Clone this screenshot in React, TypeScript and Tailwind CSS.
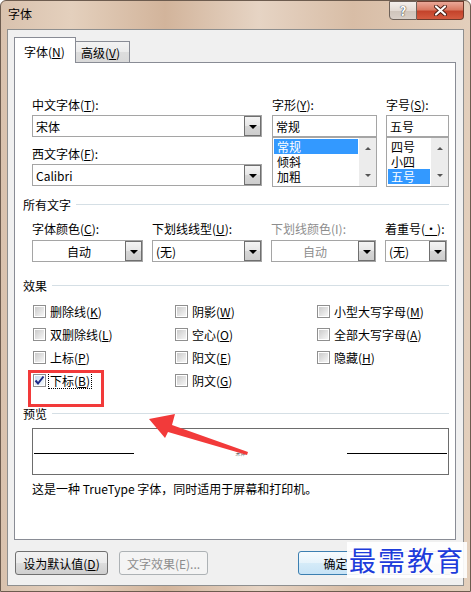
import React from "react";

const font = "font-['Noto_Sans_CJK_SC',sans-serif]";

function Acc({ children }: { children: React.ReactNode }) {
  return <span className="underline decoration-1 underline-offset-[1px]">{children}</span>;
}

function DropBtn() {
  return (
    <div className="w-[17px] self-stretch border border-[#6f6f6f] bg-[linear-gradient(#f4f4f4,#e6e6e6_50%,#d6d6d6_51%,#cdcdcd)] flex items-center justify-center">
      <div className="w-0 h-0 mt-[1px] border-l-[4px] border-r-[4px] border-t-[4px] border-l-transparent border-r-transparent border-t-black" />
    </div>
  );
}

function Combo({ text, btn, center, disabled }: { text: string; btn?: boolean; center?: boolean; disabled?: boolean }) {
  return (
    <div className="h-[22px] flex border border-[#a5a5a5] bg-white">
      <div
        className={
          "flex-1 flex items-center leading-[15px] " +
          (center ? "justify-center " : "pl-[3px] ") +
          (disabled ? "text-[#8d8d8d]" : "text-black")
        }
      >
        {text}
      </div>
      {btn && <DropBtn />}
    </div>
  );
}

function ScrollBar() {
  return (
    <div className="w-[17px] bg-[#ececec] flex flex-col items-center justify-between py-[9px]">
      <div className="w-0 h-0 border-l-[3px] border-r-[3px] border-b-[3px] border-l-transparent border-r-transparent border-b-[#555]" />
      <div className="w-0 h-0 border-l-[3px] border-r-[3px] border-t-[3px] border-l-transparent border-r-transparent border-t-[#555]" />
    </div>
  );
}

function ListBox({ items, sel }: { items: string[]; sel: number }) {
  return (
    <div className="h-[50px] border border-[#a5a5a5] bg-white flex">
      <div className="flex-1 p-[1px]">
        {items.map((t, i) => (
          <div
            key={t}
            className={"h-[15px] leading-[15px] pl-[3px] " + (i === sel ? "bg-[#3399ff] text-white" : "text-black")}
          >
            {t}
          </div>
        ))}
      </div>
      <ScrollBar />
    </div>
  );
}

function Label({ children, gray }: { children: React.ReactNode; gray?: boolean }) {
  return <div className={"h-[15px] leading-[15px] whitespace-nowrap " + (gray ? "text-[#8d8d8d]" : "text-black")}>{children}</div>;
}

function Group({ title }: { title: string }) {
  return (
    <div className="flex items-center h-[15px] leading-[15px]">
      <span>{title}</span>
      <div className="flex-1 h-px bg-[#d5dfe5] ml-[5px] mt-[-1px]" />
    </div>
  );
}

function Check({ checked }: { checked?: boolean }) {
  return (
    <div className="w-[13px] h-[13px] border border-[#8f8f8f] bg-white p-[1px] shrink-0">
      <div
        className={
          "w-full h-full relative " +
          (checked
            ? "bg-[linear-gradient(135deg,#c9dcee,#f4f8fc)]"
            : "bg-[linear-gradient(135deg,#cbcbcb,#f6f6f6)]")
        }
      >
        {checked && (
          <svg className="absolute left-[-1px] top-[-1px]" width="11" height="11" viewBox="0 0 11 11">
            <path d="M1.5 5.5 L4 8.5 L9.5 1.5" fill="none" stroke="#1b2a86" strokeWidth="2" />
          </svg>
        )}
      </div>
    </div>
  );
}

function CheckItem({ label, acc, checked, focus }: { label: string; acc: string; checked?: boolean; focus?: boolean }) {
  return (
    <div className={"flex items-center h-[23px] " + (focus ? "gap-[2px]" : "gap-[4px]")}>
      <Check checked={checked} />
      <span className={"leading-[15px] whitespace-nowrap " + (focus ? "border border-dotted border-black px-px" : "")}>
        {label}(<Acc>{acc}</Acc>)
      </span>
    </div>
  );
}

function Button({ children, disabled, def, w }: { children?: React.ReactNode; disabled?: boolean; def?: boolean; w: string }) {
  return (
    <div
      className={
        "h-[24px] rounded-[3px] border flex items-center justify-center leading-[15px] " +
        w +
        " " +
        (disabled
          ? "border-[#adb2b5] bg-[#f4f4f4] text-[#8d8d8d]"
          : def
          ? "border-[#3c7fb1] bg-[linear-gradient(#f6fbfe,#e6f3fb_50%,#d5ebf8_51%,#c7e3f6)] text-black"
          : "border-[#707070] bg-[linear-gradient(#f2f2f2,#ebebeb_50%,#dddddd_51%,#cfcfcf)] text-black")
      }
    >
      {children}
    </div>
  );
}

export default function App() {
  return (
    <div
      className={
        font +
        " relative w-[471px] h-[592px] overflow-hidden text-[12px] text-black rounded-t-[6px] border border-[#6d5c4f] bg-[linear-gradient(90deg,#d9c2ae,#e4d0bd_15%,#d2b49b_35%,#e6d4c4_55%,#d8bda6_75%,#e3cfbc)]"
      }
    >
      {/* title bar */}
      <div className="h-[28px] flex items-start">
        <div className="pl-[7px] pt-[5px] leading-[15px] flex-1">字体</div>
        <div className="flex mr-[6px]">
          <div className="w-[28px] h-[19px] rounded-bl-[4px] border border-[#6e625a] bg-[linear-gradient(#f5f0ec,#e3dad3_50%,#cfc4bb_51%,#d9cfc7)] flex items-center justify-center text-white font-bold text-[13px] leading-none [text-shadow:0_0_1px_#333,0_0_1px_#333]">
            ?
          </div>
          <div className="w-[47px] h-[19px] rounded-br-[4px] border border-l-0 border-[#6e3a2c] bg-[linear-gradient(#eaa898,#d97a63_45%,#c4432b_55%,#d45b40)] flex items-center justify-center">
            <svg width="13" height="11" viewBox="0 0 13 11">
              <path d="M2 1.5 L11 9.5 M11 1.5 L2 9.5" stroke="#4a1f16" strokeWidth="4" strokeLinecap="round" />
              <path d="M2 1.5 L11 9.5 M11 1.5 L2 9.5" stroke="#ffffff" strokeWidth="2.2" strokeLinecap="round" />
            </svg>
          </div>
        </div>
      </div>

      {/* client area */}
      <div className="ml-[6px] w-[457px] h-[557px] border border-[#8e8f8f] bg-[#f0f0f0] pt-[7px]">
        {/* tabs */}
        <div className="flex items-end h-[26px] ml-[6px] relative z-10 -mb-px">
          <div className="w-[62px] h-[26px] border border-b-0 border-[#898c95] bg-white flex items-center pl-[9px] leading-[15px] pt-[1px]">
            字体(<Acc>N</Acc>)
          </div>
          <div className="w-[54px] h-[22px] border border-l-0 border-[#898c95] bg-[linear-gradient(#f3f3f3,#ebebeb_50%,#dddddd_51%,#d9d9d9)] flex items-center pl-[5px] leading-[15px]">
            高级(<Acc>V</Acc>)
          </div>
        </div>

        {/* panel */}
        <div className="ml-[6px] w-[442px] h-[478px] border border-[#898c95] bg-white pl-[8px] pr-[6px] pt-[34px]">
          <div className="ml-[9px] grid grid-cols-[230px_105px_62px] gap-x-[10px]">
            <div className="flex flex-col">
              <Label>
                中文字体(<Acc>T</Acc>):
              </Label>
              <div className="mt-[3px]">
                <Combo text="宋体" btn />
              </div>
              <div className="mt-[9px]">
                <Label>
                  西文字体(<Acc>F</Acc>):
                </Label>
              </div>
              <div className="mt-[3px]">
                <Combo text="Calibri" btn />
              </div>
            </div>
            <div className="flex flex-col">
              <Label>
                字形(<Acc>Y</Acc>):
              </Label>
              <div className="mt-[3px]">
                <Combo text="常规" />
              </div>
              <ListBox items={["常规", "倾斜", "加粗"]} sel={0} />
            </div>
            <div className="flex flex-col -ml-px">
              <Label>
                字号(<Acc>S</Acc>):
              </Label>
              <div className="mt-[3px]">
                <Combo text="五号" />
              </div>
              <ListBox items={["四号", "小四", "五号"]} sel={2} />
            </div>
          </div>

          <div className="mt-[10px]">
            <Group title="所有文字" />
          </div>
          <div className="mt-[9px] ml-[9px] grid grid-cols-[111px_110px_105px_62px] gap-x-[9px]">
            <Label>
              字体颜色(<Acc>C</Acc>):
            </Label>
            <Label>
              下划线线型(<Acc>U</Acc>):
            </Label>
            <Label gray>下划线颜色(I):</Label>
            <Label>
              着重号(<Acc>·</Acc>):
            </Label>
          </div>
          <div className="mt-[4px] ml-[9px] grid grid-cols-[111px_110px_105px_62px] gap-x-[9px]">
            <Combo text="自动" btn center />
            <Combo text="(无)" btn />
            <Combo text="自动" btn center disabled />
            <Combo text="(无)" btn />
          </div>

          <div className="mt-[16px]">
            <Group title="效果" />
          </div>
          <div className="mt-[7px] ml-[10px] grid grid-cols-[142px_142px_142px] grid-flow-col grid-rows-4">
            <CheckItem label="删除线" acc="K" />
            <CheckItem label="双删除线" acc="L" />
            <CheckItem label="上标" acc="P" />
            <CheckItem label="下标" acc="B" checked focus />
            <CheckItem label="阴影" acc="W" />
            <CheckItem label="空心" acc="O" />
            <CheckItem label="阳文" acc="E" />
            <CheckItem label="阴文" acc="G" />
            <CheckItem label="小型大写字母" acc="M" />
            <CheckItem label="全部大写字母" acc="A" />
            <CheckItem label="隐藏" acc="H" />
          </div>

          <div className="mt-[14px]">
            <Group title="预览" />
          </div>
          <div className="mt-[7px] ml-[9px] h-[47px] border border-[#6d6d6d] flex items-start pt-[24px] px-[1px]">
            <div className="w-[100px] h-px bg-black" />
            <div className="flex-1 flex justify-center">
              <span className="text-[5px] leading-[5px] text-[#555] mt-[-3px]">宋体</span>
            </div>
            <div className="w-[100px] h-px bg-black" />
          </div>
          <div className="mt-[6px] ml-[9px] leading-[15px]">这是一种 TrueType 字体，同时适用于屏幕和打印机。</div>
        </div>

        {/* buttons */}
        <div className="mt-[11px] ml-[7px] flex items-center">
          <Button w="w-[93px]">
            设为默认值(<Acc>D</Acc>)
          </Button>
          <div className="ml-[11px]">
            <Button w="w-[89px]" disabled>
              文字效果(E)...
            </Button>
          </div>
          <div className="ml-[90px]">
            <Button w="w-[75px]" def>
              确定
            </Button>
          </div>
          <div className="ml-[7px]">
            <Button w="w-[75px]" />
          </div>
        </div>
      </div>

      {/* annotation: red rectangle */}
      <div className="absolute left-[27px] top-[369px] w-[76px] h-[37px] border-[3px] border-[#f23a3a] pointer-events-none" />

      {/* annotation: red arrow */}
      <svg className="absolute left-0 top-0 pointer-events-none" width="471" height="592" viewBox="0 0 471 592">
        <polygon points="148,418 174,413 171,424 247,451 246,454 167,431 164,437" fill="#f23a3a" />
      </svg>

      {/* watermark */}
      <div className="absolute left-[346px] top-[541px] px-[2px] bg-white/90 text-[27px] leading-[36px] tracking-[2px] text-[#1d3cdb] font-normal [text-shadow:1px_1px_0_#fff,-1px_-1px_0_#fff,1px_-1px_0_#fff,-1px_1px_0_#fff]">
        最需教育
      </div>
    </div>
  );
}
